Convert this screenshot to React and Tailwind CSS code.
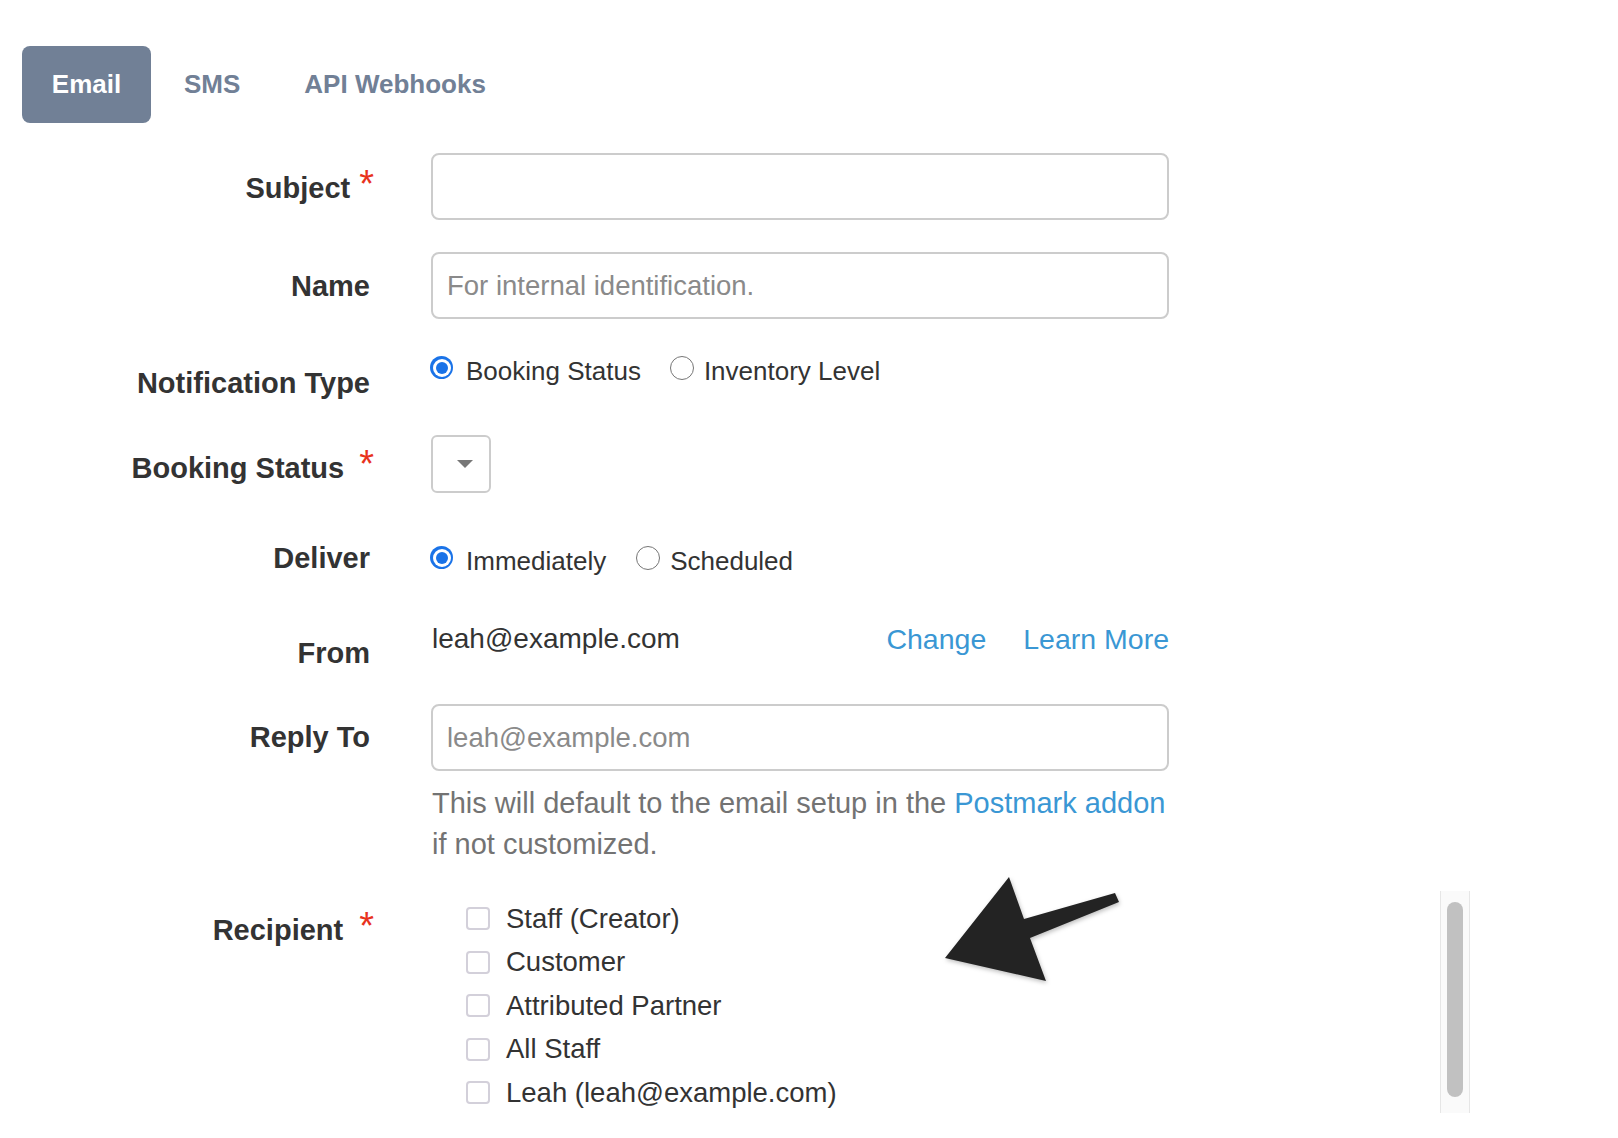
import React from "react";

function Row({ rowClass, labelClass, label, req, reqClass, contentClass, children }) {
  return (
    <div className={"flex " + rowClass}>
      <div className={"w-[374px] shrink-0 text-right text-[29px] leading-[34px] font-bold text-[#333333] " + labelClass}>
        {label}
        {req ? (
          <span className={"relative -top-[1px] inline-block text-[38px] leading-[0] font-normal text-[#e8321e] " + reqClass}>*</span>
        ) : null}
      </div>
      <div className={"ml-[57px] shrink-0 " + contentClass}>{children}</div>
    </div>
  );
}

function Radio({ checked }) {
  if (checked) {
    return (
      <span className="mb-[7px] flex h-[23px] w-[23px] shrink-0 items-center justify-center rounded-full bg-[#1a73e8]">
        <span className="flex h-[18px] w-[18px] items-center justify-center rounded-full bg-white">
          <span className="h-[12px] w-[12px] rounded-full bg-[#1a73e8]" />
        </span>
      </span>
    );
  }
  return <span className="mb-[7px] h-[24px] w-[24px] shrink-0 rounded-full border-[1.5px] border-[#767676] bg-white" />;
}

function Check({ label }) {
  return (
    <div className="flex h-[43.5px] items-center gap-[16px]">
      <span className="h-[23px] w-[24px] shrink-0 rounded-[4px] border-2 border-[#d3d0da] bg-white" />
      <span className="text-[27.5px] leading-[32px] text-[#333333]">{label}</span>
    </div>
  );
}

const inputCls =
  "block w-[738px] h-[67px] rounded-[8px] border-2 border-[#cccccc] bg-white px-[14px] text-[27.5px] text-[#333333] outline-none placeholder:text-[#8a8a8a]";

export default function App() {
  return (
    <div className="relative min-h-[1138px] w-full overflow-hidden bg-white font-[family-name:'Liberation_Sans',Arial,Helvetica,sans-serif] text-[#333333]">
      {/* Tabs */}
      <div className="flex pl-[22px] pt-[46px]">
        <button className="h-[77px] w-[129px] rounded-[8px] bg-[#718096] text-[26px] font-bold text-white">Email</button>
        <button className="h-[77px] pl-[33px] pr-[32px] text-[26px] font-bold text-[#718096]">SMS</button>
        <button className="h-[77px] px-[32px] text-[26px] font-bold text-[#718096]">API Webhooks</button>
      </div>

      <div className="flex flex-col">
        <Row rowClass="mt-[30px]" labelClass="pt-[18px]" label="Subject" req reqClass="ml-[9px]" contentClass="w-[738px]">
          <input className={inputCls} />
        </Row>

        <Row rowClass="mt-[32px]" labelClass="pt-[17px] pr-[4px]" label="Name" contentClass="w-[738px]">
          <input className={inputCls} placeholder="For internal identification." />
        </Row>

        <Row rowClass="mt-[36px]" labelClass="pt-[11px] pr-[4px]" label="Notification Type" contentClass="w-[738px]">
          <div className="-ml-[1px] flex h-[32px] items-center text-[26px] leading-[32px]">
            <div className="flex items-center gap-[13px]">
              <Radio checked />
              <span>Booking Status</span>
            </div>
            <div className="ml-[29px] flex items-center gap-[10px]">
              <Radio />
              <span>Inventory Level</span>
            </div>
          </div>
        </Row>

        <Row rowClass="mt-[35px]" labelClass="pt-[16px]" label="Booking Status" req reqClass="ml-[15px]" contentClass="w-[738px]">
          <div className="flex h-[58px] w-[60px] items-center justify-center rounded-[6px] border-2 border-[#cccccc] pl-[8px]">
            <svg width="16" height="8" viewBox="0 0 16 8">
              <polygon points="0,0 16,0 8,8" fill="#777777" />
            </svg>
          </div>
        </Row>

        <Row rowClass="mt-[42px]" labelClass="pt-[6px] pr-[4px]" label="Deliver" contentClass="w-[738px] pt-[10px]">
          <div className="-ml-[1px] flex h-[32px] items-center text-[26px] leading-[32px]">
            <div className="flex items-center gap-[13px]">
              <Radio checked />
              <span>Immediately</span>
            </div>
            <div className="ml-[30px] flex items-center gap-[10px]">
              <Radio />
              <span>Scheduled</span>
            </div>
          </div>
        </Row>

        <Row rowClass="mt-[46px]" labelClass="pt-[13px] pr-[4px]" label="From" contentClass="w-[738px]">
          <div className="flex h-[32px] items-center justify-between leading-[32px]">
            <span className="pl-[1px] text-[28px]">leah@example.com</span>
            <div className="flex gap-[37px] text-[28.5px] text-[#3a97d4]">
              <a href="#" onClick={(e) => e.preventDefault()}>Change</a>
              <a href="#" onClick={(e) => e.preventDefault()}>Learn More</a>
            </div>
          </div>
        </Row>

        <Row rowClass="mt-[34px]" labelClass="pt-[16px] pr-[4px]" label="Reply To" contentClass="w-[738px]">
          <input className={inputCls} placeholder="leah@example.com" />
          <p className="mt-[12px] pl-[1px] text-[29px] leading-[41px] text-[#737373]">
            <span className="whitespace-nowrap">
              This will default to the email setup in the{" "}
              <a href="#" onClick={(e) => e.preventDefault()} className="text-[#3a97d4]">Postmark addon</a>
            </span>
            <br />
            if not customized.
          </p>
        </Row>

        <Row rowClass="mt-[26px]" labelClass="pt-[22px]" label="Recipient" req reqClass="ml-[16px]" contentClass="w-[1039px]">
          <div className="flex h-[222px]">
            <div className="flex-1 pl-[35px] pt-[6px]">
              <Check label="Staff (Creator)" />
              <Check label="Customer" />
              <Check label="Attributed Partner" />
              <Check label="All Staff" />
              <Check label="Leah (leah@example.com)" />
            </div>
            <div className="flex h-[222px] w-[30px] justify-center border-x border-[#e6e6e6] bg-[#fafafa] pt-[11px]">
              <div className="h-[195px] w-[16px] rounded-full bg-[#c1c1c1]" />
            </div>
          </div>
        </Row>
      </div>

      {/* Annotation arrow */}
      <svg
        className="absolute left-[940px] top-[870px] drop-shadow-[1px_2px_2px_rgba(0,0,0,0.25)]"
        width="185"
        height="115"
        viewBox="0 0 185 115"
      >
        <polygon points="5,88 69,7 84,49 175,23 179,32 90,68 106,111" fill="#232323" />
      </svg>
    </div>
  );
}
